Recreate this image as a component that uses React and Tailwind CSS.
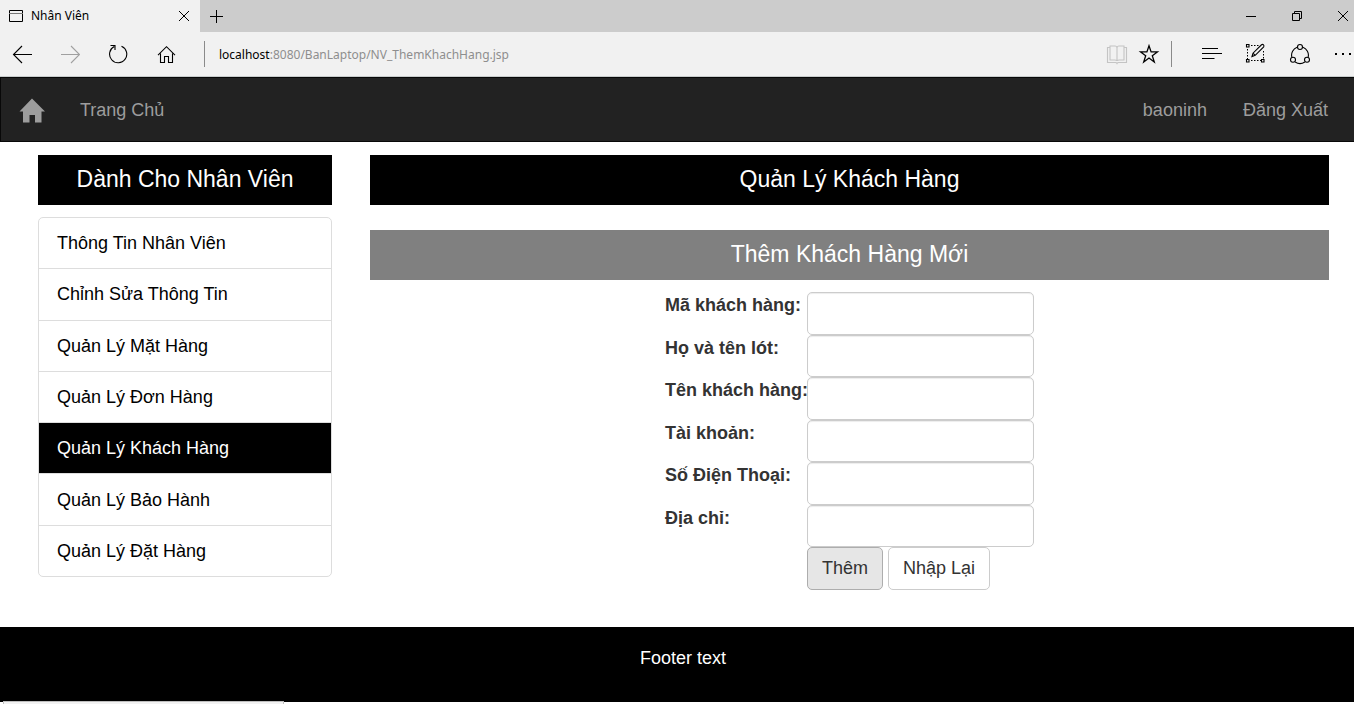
const MENU = [
  "Thông Tin Nhân Viên",
  "Chỉnh Sửa Thông Tin",
  "Quản Lý Mặt Hàng",
  "Quản Lý Đơn Hàng",
  "Quản Lý Khách Hàng",
  "Quản Lý Bảo Hành",
  "Quản Lý Đặt Hàng",
];

const FIELDS = [
  ["ma", "Mã khách hàng:"],
  ["ho", "Họ và tên lót:"],
  ["ten", "Tên khách hàng:"],
  ["taikhoan", "Tài khoản:"],
  ["sdt", "Số Điện Thoại:"],
  ["diachi", "Địa chỉ:"],
];

function Icon({ w = 20, h = 20, children, className = "" }) {
  return (
    <svg
      width={w}
      height={h}
      viewBox={`0 0 ${w} ${h}`}
      fill="none"
      stroke="currentColor"
      strokeWidth="1.1"
      className={`shrink-0 ${className}`}
      aria-hidden="true"
    >
      {children}
    </svg>
  );
}

function TitleBar() {
  return (
    <div className="flex h-8 items-stretch bg-[#cccccc]">
      <div className="flex w-[200px] items-center bg-[#f1f1f1] pl-2 pr-2">
        <Icon w={16} h={14}>
          <path d="M1.500 1.500h13v11h-13z" strokeWidth="1" />
          <path d="M1 4.500h14" strokeWidth="1" stroke="#777777" />
        </Icon>
        <span className="ml-[7px] text-xs">Nhân Viên</span>
        <button type="button" aria-label="Close tab" className="ml-auto">
          <Icon w={16} h={16}>
            <path d="M3 3l10 10M13 3L3 13" strokeWidth="1" />
          </Icon>
        </button>
      </div>
      <button type="button" aria-label="New tab" className="ml-2">
        <Icon w={16} h={16}>
          <path d="M2 8.500h13M8.500 2v13" strokeWidth="1" />
        </Icon>
      </button>
      <div className="ml-auto flex items-center gap-[30px] pr-[3px]">
        <button type="button" aria-label="Minimize">
          <Icon w={16} h={16}>
            <path d="M3 8.500h10" strokeWidth="1" />
          </Icon>
        </button>
        <button type="button" aria-label="Restore">
          <Icon w={16} h={16}>
            <path d="M3.500 5.500h7v7h-7zM5.500 5.500v-2h7v7h-2" strokeWidth="1" />
          </Icon>
        </button>
        <button type="button" aria-label="Close window">
          <Icon w={16} h={16}>
            <path d="M3 3l10 10M13 3L3 13" strokeWidth="1" />
          </Icon>
        </button>
      </div>
    </div>
  );
}

function Toolbar() {
  return (
    <div className="flex h-[45px] items-center border-b border-[#c8cccc] bg-[#f1f1f1] pr-px">
      <div className="flex items-center gap-7 pl-3">
        <button type="button" aria-label="Back">
          <Icon>
            <path d="M1.500 10.500H20M10 2L1.500 10.500 10 19" />
          </Icon>
        </button>
        <button type="button" aria-label="Forward" className="text-[#a0a0a0]">
          <Icon>
            <path d="M1 10.500h18.500M11 2l8.500 8.500L11 19" />
          </Icon>
        </button>
        <button type="button" aria-label="Refresh">
          <Icon>
            <path d="M6.200 2.500A8.600 8.600 0 1 0 13.500 2.200M2.500 1.500h4.500v4.500" />
          </Icon>
        </button>
        <button type="button" aria-label="Home">
          <Icon>
            <path d="M2 11.200l8.500-8.500 8.500 8.500M4.500 9.500v9h4v-6h4v6h4v-9" />
          </Icon>
        </button>
      </div>
      <div className="ml-7 flex h-[26px] flex-1 items-center border-l border-[#8a8a8a] pl-[14px] pt-px text-xs text-[#8e8e8e]">
        <span className="text-black">localhost</span>:8080/BanLaptop/NV_ThemKhachHang.jsp
      </div>
      <button type="button" aria-label="Reading view" className="text-[#c4c4c4]">
        <Icon w={22} h={22}>
          <path d="M4 4.500H1.500v15h8q1 0 1.500 1 .5-1 1.500-1h8v-15H18M4 3h5q2 0 2 2v13q0-1-2-1H4zM18 3h-5q-2 0-2 2v13q0-1 2-1h5z" />
        </Icon>
      </button>
      <button type="button" aria-label="Favorite" className="ml-[10px]">
        <Icon w={22} h={22}>
          <path d="M11 2.800l2.100 6.100h6.300l-5.100 3.800 2 6.300-5.300-3.900L5.700 19l2-6.300-5.100-3.800h6.300z" strokeWidth="1.300" />
        </Icon>
      </button>
      <div className="ml-[11px] flex h-[26px] items-center gap-[22px] border-l border-[#8a8a8a] pl-[29px]">
        <button type="button" aria-label="Hub">
          <Icon w={22} h={22}>
            <path d="M1 5.500h16M1 10.500h20M1 15.500h12.500" />
          </Icon>
        </button>
        <button type="button" aria-label="Make a web note">
          <Icon w={22} h={22}>
            <path d="M6 2.500h8M2.500 6v10M6 17.500h10M18.500 8v8" strokeDasharray="1.500 1.500" strokeWidth="1" />
            <path d="M1.500 1.500h2.500v2.500H1.500zM1.500 16.500h2.500v2.500H1.500zM16.500 16.500h2.500v2.500h-2.500z" />
            <path d="M7 13.500l1-3.300L16.500 1.800q1.200-.8 2 0t.2 2L10.200 12.300zM8 10.200l2.200 2.100" />
          </Icon>
        </button>
        <button type="button" aria-label="Share">
          <Icon w={22} h={22}>
            <path d="M8 4.200A8.500 8.500 0 0 0 2.800 14M14 4.200a8.500 8.500 0 0 1 5.200 9.800M6.200 19a8.500 8.500 0 0 0 9.600 0" />
            <circle cx="11" cy="4" r="2.500" />
            <circle cx="4" cy="16.800" r="2.500" />
            <circle cx="18" cy="16.800" r="2.500" />
          </Icon>
        </button>
        <button type="button" aria-label="More">
          <Icon w={20} h={22}>
            <path d="M2 10h2v2H2zM9 10h2v2H9zM16 10h2v2h-2z" fill="currentColor" stroke="none" />
          </Icon>
        </button>
      </div>
    </div>
  );
}

function NavBar() {
  return (
    <nav className="flex h-[65px] items-center border-y border-l border-[#080808] bg-[#222222] pr-[26px] pt-0.5 text-[#9d9d9d]">
      <a href="#home" aria-label="Home" className="ml-[18px]">
        <svg width="26" height="26" viewBox="0 0 26 26" fill="currentColor" aria-hidden="true">
          <path d="M13 .5L26 13.500h-3.500V24.500H16V17h-5.500v7.500H4v-11H.500z" />
        </svg>
      </a>
      <a href="#trang-chu" className="ml-[35px]">Trang Chủ</a>
      <a href="#tai-khoan" className="ml-auto">baoninh</a>
      <a href="#dang-xuat" className="ml-9">Đăng Xuất</a>
    </nav>
  );
}

export default function App() {
  return (
    <div className="relative flex min-h-screen flex-col bg-white font-['Liberation_Sans',Arial,sans-serif] text-[18px] leading-[27px] text-[#333333]">
      <header className="font-['Noto_Sans','Open_Sans',sans-serif] text-black">
        <TitleBar />
        <Toolbar />
      </header>
      <NavBar />

      <div className="flex gap-[38px] pb-[37px] pl-[38px] pr-[25px] pt-[13px]">
        <aside className="w-[294px] shrink-0">
          <h2 className="bg-black pb-[13px] pt-3 text-center text-[23px] leading-[25px] text-white">Dành Cho Nhân Viên</h2>
          <ul className="mt-3 flex min-h-[360px] flex-col divide-y divide-[#dddddd] rounded-[5px] border border-[#dddddd] text-black">
            {MENU.map((item) => (
              <li key={item} className="flex flex-1">
                <a
                  href="#menu"
                  className={
                    item === "Quản Lý Khách Hàng"
                      ? "flex flex-1 items-center bg-black px-[18px] pt-px text-white"
                      : "flex flex-1 items-center px-[18px] pt-px"
                  }
                >
                  {item}
                </a>
              </li>
            ))}
          </ul>
        </aside>

        <main className="min-w-0 flex-1">
          <h2 className="bg-black pb-[13px] pt-3 text-center text-[23px] leading-[25px] text-white">Quản Lý Khách Hàng</h2>
          <h3 className="mt-[25px] bg-[#808080] pb-[13px] pt-3 text-center text-[23px] leading-[25px] text-white">Thêm Khách Hàng Mới</h3>
          <form
            className="mx-auto mt-3 grid min-h-[298px] w-fit auto-rows-fr grid-cols-[142px_227px]"
            onSubmit={(e) => e.preventDefault()}
          >
            {FIELDS.map(([id, label]) => (
              <div key={id} className="col-span-2 grid grid-cols-subgrid">
                <label htmlFor={id} className="whitespace-nowrap font-bold">{label}</label>
                <input
                  id={id}
                  type="text"
                  className="w-full rounded-[5px] border border-[#cccccc] px-[15px] text-[#555555] shadow-[inset_0_1px_1px_rgba(0,0,0,0.075)]"
                />
              </div>
            ))}
            <div className="col-start-2 flex gap-[5px]">
              <button type="submit" className="rounded-[5px] border border-[#adadad] bg-[#e6e6e6] px-[14px]">Thêm</button>
              <button type="reset" className="rounded-[5px] border border-[#cccccc] bg-white px-[14px]">Nhập Lại</button>
            </div>
          </form>
        </main>
      </div>

      <footer className="bg-black pb-[30px] pl-3 pt-[18px] text-center text-white">Footer text</footer>

      <div className="absolute bottom-0 left-[3px] h-[3px] w-[281px] border-x border-t border-[#bebebe] bg-[#f2f2f2]" />
    </div>
  );
}
